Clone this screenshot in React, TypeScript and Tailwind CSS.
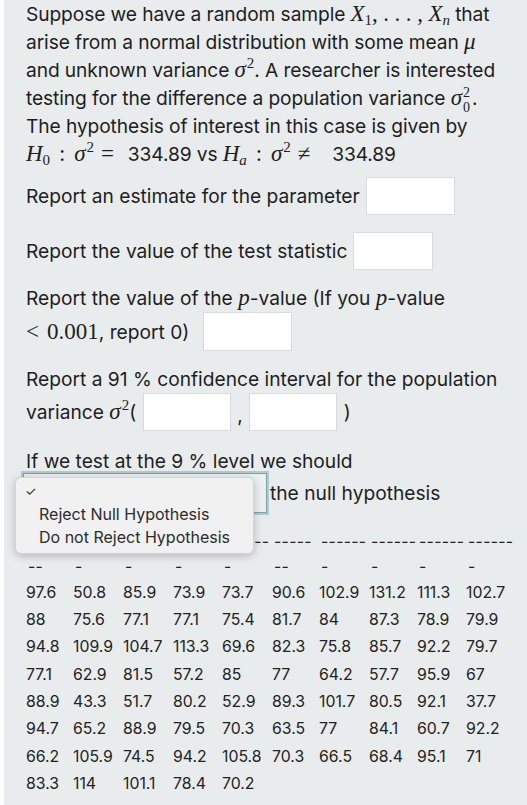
import React from 'react'

const MATH = { fontFamily: '"Liberation Serif", "DejaVu Serif", serif' }

function M({ children, upright, cls = '' }: { children: React.ReactNode; upright?: boolean; cls?: string }) {
    return (
        <span className={`${upright ? '' : 'italic'} text-[23px] leading-none ${cls}`} style={MATH}>
            {children}
        </span>
    )
}

function Sigma2({ sub }: { sub?: string }) {
    return (
        <span className="text-[23px] italic leading-none" style={MATH}>
            σ
            {sub ? (
                <span className="relative inline-block w-[10px] not-italic text-[14px] leading-none">
                    <span className="absolute left-[1px] -top-[19px]">2</span>
                    <span className="absolute left-[1px] -top-[4px]">{sub}</span>
                </span>
            ) : (
                <sup className="not-italic text-[15px] ml-[1px] -top-[0.6em]">2</sup>
            )}
        </span>
    )
}

function Box({ w, h = 'h-[38px]' }: { w: string; h?: string }) {
    return <span className={`inline-block shrink-0 ${w} ${h} bg-white border border-[#d9dbdd] align-middle`} />
}

// first four groups sit under the open dropdown
const dashRow1 = ['', '', '', '', '------', '-----', '------', '------', '------', '------']
const dashRow2 = ['--', '-', '-', '-', '-', '--', '-', '-', '-', '-']

const data = [
    ['97.6', '50.8', '85.9', '73.9', '73.7', '90.6', '102.9', '131.2', '111.3', '102.7'],
    ['88', '75.6', '77.1', '77.1', '75.4', '81.7', '84', '87.3', '78.9', '79.9'],
    ['94.8', '109.9', '104.7', '113.3', '69.6', '82.3', '75.8', '85.7', '92.2', '79.7'],
    ['77.1', '62.9', '81.5', '57.2', '85', '77', '64.2', '57.7', '95.9', '67'],
    ['88.9', '43.3', '51.7', '80.2', '52.9', '89.3', '101.7', '80.5', '92.1', '37.7'],
    ['94.7', '65.2', '88.9', '79.5', '70.3', '63.5', '77', '84.1', '60.7', '92.2'],
    ['66.2', '105.9', '74.5', '94.2', '105.8', '70.3', '66.5', '68.4', '95.1', '71'],
    ['83.3', '114', '101.1', '78.4', '70.2'],
]

const COLS = 'grid grid-cols-[47px_50px_50px_49px_50px_47px_50px_48px_49px_60px]'

export default function App() {
    return (
        <div className="bg-white pl-[4px]" style={{ fontFamily: 'Inter, "Liberation Sans", sans-serif' }}>
            <div className="bg-[#e9eced] min-h-[805px] pl-[22px] pr-1 text-[#1e1e1e]">
                <div className="text-[19.2px] leading-[28px] tracking-[-0.1px] whitespace-nowrap">
                    <div className="h-[28px]">
                        Suppose we have a random sample{' '}
                        <M>
                            X<sub className="text-[15px] not-italic">1</sub>
                            <span className="not-italic">, . . . , </span>X<sub className="text-[15px]">n</sub>
                        </M>{' '}
                        that
                    </div>
                    <div className="h-[28px]">
                        arise from a normal distribution with some mean <M>μ</M>
                    </div>
                    <div className="h-[28px]">
                        and unknown variance <Sigma2 />. A researcher is interested
                    </div>
                    <div className="h-[28px]">
                        testing for the difference a population variance <Sigma2 sub="0" />.
                    </div>
                    <div className="h-[28px]">The hypothesis of interest in this case is given by</div>
                    <div className="h-[28px]">
                        <M>
                            H<sub className="text-[15px] not-italic">0</sub>
                        </M>
                        <M upright cls="mx-[9px]">:</M>
                        <Sigma2 />
                        <M upright cls="ml-[7px] mr-[14px]">=</M>
                        334.89 vs{' '}
                        <M>
                            H<sub className="text-[15px]">a</sub>
                        </M>
                        <M upright cls="mx-[9px]">:</M>
                        <Sigma2 />
                        <M upright cls="ml-[7px] mr-[22px]">≠</M>
                        334.89
                    </div>
                </div>

                <div className="mt-[9px] flex items-center gap-[6px] text-[19.2px]">
                    <span>Report an estimate for the parameter</span>
                    <Box w="w-[89px]" />
                </div>

                <div className="mt-[17px] flex items-center gap-[6px] text-[19.2px]">
                    <span>Report the value of the test statistic</span>
                    <Box w="w-[80px]" />
                </div>

                <div className="mt-[14px] text-[19.2px] leading-[28px] whitespace-nowrap">
                    <div className="h-[28px]">
                        Report the value of the <M>p</M>-value (If you <M>p</M>-value
                    </div>
                    <div className="flex items-center gap-[14px] h-[39px]">
                        <span>
                            <M upright>
                                &lt;<span className="ml-[8px]">0.001</span>
                            </M>
                            , report 0)
                        </span>
                        <Box w="w-[89px]" h="h-[39px]" />
                    </div>
                </div>

                <div className="mt-[14px] text-[19.2px] leading-[28px] whitespace-nowrap">
                    <div className="h-[28px]">Report a 91 % confidence interval for the population</div>
                    <div className="flex items-center h-[38px]">
                        <span>
                            variance <Sigma2 />(
                        </span>
                        <span className="ml-[7px] flex">
                            <Box w="w-[88px]" />
                        </span>
                        <span className="mx-[6px] mt-[6px]">,</span>
                        <Box w="w-[88px]" />
                        <span className="ml-[7px]">)</span>
                    </div>
                </div>

                <div className="relative mt-[16px] text-[19.2px] leading-[28px]">
                    <div className="h-[28px]">If we test at the 9 % level we should</div>
                    <div className="-mt-[2px] flex items-center ml-[-3px]">
                        <span className="inline-block w-[244px] h-[40px] border border-[#7ea0a6] ring-2 ring-[#b3cbcf] bg-[#eceff0]" />
                        <span className="ml-[3px]">the null hypothesis</span>
                    </div>

                    <div className="absolute left-[-11px] top-[30px] w-[239px] h-[77px] rounded-md bg-[#f1f1f1] shadow-[0_2px_8px_rgba(0,0,0,0.22)] border border-[#d4d4d4] text-[16px] leading-[23px] text-[#2b2b2b] z-10 pt-[2px]">
                        <div className="pl-[9px] text-[13px]">✓</div>
                        <div className="pl-[23px]">Reject Null Hypothesis</div>
                        <div className="pl-[23px]">Do not Reject Hypothesis</div>
                    </div>
                </div>

                <div className="mt-[16px] text-[15.8px] text-[#222] whitespace-nowrap">
                    <div className={`${COLS} h-[26px] items-center`}>
                        {dashRow1.map((d, i) => (
                            <span key={i} className="tracking-[0.3px] whitespace-nowrap pl-[2px]">
                                {d}
                            </span>
                        ))}
                    </div>
                    <div className={`${COLS} h-[24px] items-center`}>
                        {dashRow2.map((d, i) => (
                            <span key={i} className="tracking-[0.3px] pl-[2px] whitespace-nowrap">
                                {d}
                            </span>
                        ))}
                    </div>
                    {data.map((row, r) => (
                        <div key={r} className={`${COLS} h-[27.3px] items-center`}>
                            {row.map((v, i) => (
                                <span key={i}>{v}</span>
                            ))}
                        </div>
                    ))}
                </div>
            </div>
        </div>
    )
}
